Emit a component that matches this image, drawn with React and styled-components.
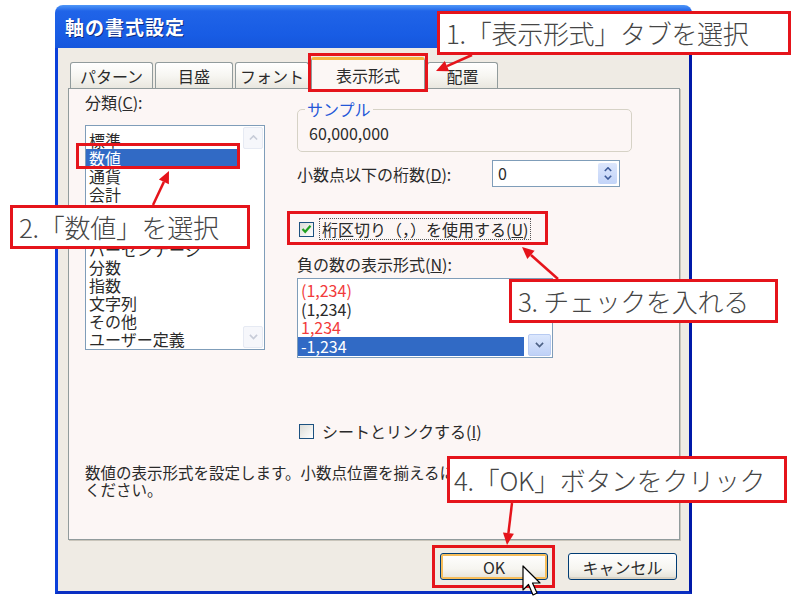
import React from 'react';
import styled, { createGlobalStyle } from 'styled-components';

const FONT = `"Noto Sans CJK JP", "Noto Sans", sans-serif`;
const RED = '#e5141b';

const GlobalStyle = createGlobalStyle`
  html, body {
    margin: 0;
    padding: 0;
    background: #ffffff;
  }
  body {
    font-family: ${FONT};
  }
`;

const Page = styled.div`
  position: relative;
  width: 800px;
  height: 600px;
  overflow: hidden;
  box-sizing: border-box;
  padding: 5px 0 0 55px;
  background: #ffffff;
`;

const Window = styled.div`
  width: 637px;
  height: 589px;
  display: flex;
  flex-direction: column;
`;

const TitleBar = styled.div`
  height: 43px;
  flex: none;
  display: flex;
  align-items: center;
  padding-left: 10px;
  border-radius: 8px 8px 0 0;
  background: linear-gradient(180deg, #4f97f8 0%, #2064e8 14%, #185ce4 70%, #1556dc 100%);
  color: #ffffff;
  font: bold 19px/1 ${FONT};
  letter-spacing: 1px;
  text-shadow: 1px 1px 0 #0c2c86;
`;

const Body = styled.div`
  flex: 1;
  display: flex;
  flex-direction: column;
  border: 3px solid #0b3fda;
  border-top: none;
  border-right-color: #0019a8;
  border-bottom-color: #0a2fc2;
  padding: 9px 9px 11px 10px;
  background: #efebe4;
  color: #2a2a2a;
  font-size: 16px;
`;

const TabStrip = styled.div`
  position: relative;
  z-index: 1;
  height: 32px;
  flex: none;
  display: flex;
  align-items: flex-end;
  gap: 2px;
  padding-left: 2px;
`;

const Tab = styled.div`
  width: ${p => p.$w}px;
  height: ${p => (p.$active ? 33 : 26)}px;
  margin-bottom: ${p => (p.$active ? -1 : 1)}px;
  box-sizing: border-box;
  display: flex;
  align-items: center;
  justify-content: center;
  border: 1px solid #919b9c;
  border-bottom: none;
  border-radius: 3px 3px 0 0;
  border-top: ${p => (p.$active ? '3px solid #f5b642' : '1px solid #919b9c')};
  background: ${p =>
    p.$active ? '#fcf7f5' : 'linear-gradient(180deg, #ffffff 0%, #f7f6f2 50%, #e9e7df 100%)'};
  font-size: 16px;
  padding-top: ${p => (p.$active ? 0 : 1)}px;
`;

const Panel = styled.div`
  flex: 1;
  margin-top: -1px;
  border: 1px solid #919b9c;
  box-shadow: 1px 1px 0 #c9c5bb;
  background: #fcf6f5;
  padding: 3px 0 0 16px;
`;

const Columns = styled.div`
  display: grid;
  grid-template-columns: 180px 335px;
  column-gap: 32px;
  align-items: start;
`;

const Column = styled.div`
  display: flex;
  flex-direction: column;
`;

const Label = styled.div`
  line-height: 20px;
  margin-top: ${p => p.$mt || 0}px;
  white-space: nowrap;
`;

const ListBox = styled.div`
  width: ${p => p.$w}px;
  height: ${p => p.$h}px;
  margin-top: ${p => p.$mt}px;
  box-sizing: border-box;
  border: 1px solid #7f9db9;
  background: #ffffff;
  display: flex;
  overflow: hidden;
`;

const ListItems = styled.div`
  flex: 1;
  padding-top: ${p => p.$pt}px;
  margin-right: ${p => p.$mr || 0}px;
`;

const ListItem = styled.div`
  height: ${p => p.$h}px;
  line-height: ${p => p.$h}px;
  padding-left: 3px;
  white-space: nowrap;
  color: ${p => (p.$selected ? '#ffffff' : p.$red ? '#f23b3b' : '#2a2a2a')};
  background: ${p => (p.$selected ? '#316ac5' : 'transparent')};
`;

const ScrollBar = styled.div`
  width: ${p => p.$w}px;
  display: flex;
  flex-direction: column;
  justify-content: space-between;
  padding: 1px;
  box-sizing: border-box;
`;

const ScrollButton = styled.div`
  height: 20px;
  display: flex;
  align-items: center;
  justify-content: center;
  border-radius: 2px;
  border: 1px solid ${p => (p.$faint ? '#e6eaf3' : '#b8cbf2')};
  background: ${p => (p.$faint ? '#f6f7fb' : 'linear-gradient(180deg, #dce7fd, #bfd1f7)')};
  color: ${p => (p.$faint ? '#c7ccd8' : '#4d6185')};
  visibility: ${p => (p.$hidden ? 'hidden' : 'visible')};
`;

const SampleBox = styled.fieldset`
  margin: 8px 0 0;
  padding: 5px 11px 8px;
  min-inline-size: 0;
  box-sizing: border-box;
  border: 1px solid #d6d2c6;
  border-radius: 5px;
`;

const SampleLegend = styled.legend`
  padding: 0 2px;
  margin-left: -4px;
  line-height: 18px;
  color: #2457d8;
`;

const SampleValue = styled.div`
  line-height: 20px;
`;

const FieldRow = styled.div`
  height: 27px;
  margin-top: 8px;
  display: flex;
  align-items: center;
`;

const FieldLabel = styled.div`
  width: 195px;
  white-space: nowrap;
`;

const SpinBox = styled.div`
  width: 128px;
  height: 27px;
  box-sizing: border-box;
  border: 1px solid #7f9db9;
  background: #ffffff;
  display: flex;
  align-items: stretch;
`;

const SpinValue = styled.div`
  flex: 1;
  padding-left: 5px;
  line-height: 25px;
`;

const SpinButtons = styled.div`
  width: 19px;
  margin: 2px;
  border-radius: 2px;
  background: linear-gradient(180deg, #dce6fc, #c3d4f8);
  display: flex;
  flex-direction: column;
  align-items: center;
  justify-content: center;
  gap: 3px;
  color: #3d5a99;
`;

const CheckRow = styled.div`
  height: 22px;
  margin-top: ${p => p.$mt}px;
  display: flex;
  align-items: center;
  padding-left: 2px;
`;

const CheckBox = styled.span`
  width: 15px;
  height: 15px;
  box-sizing: border-box;
  border: 1px solid #1c5180;
  background: linear-gradient(135deg, #dcdcd7, #ffffff);
  display: flex;
  align-items: center;
  justify-content: center;
  flex: none;
`;

const CheckLabel = styled.span`
  margin-left: 6px;
  padding: 0 2px;
  line-height: 20px;
  white-space: nowrap;
  outline: ${p => (p.$focus ? '1px dotted #555555' : 'none')};
`;

const Description = styled.div`
  margin-top: 22px;
  line-height: 17px;
  font-size: 15.5px;
  white-space: nowrap;
`;

const ButtonRow = styled.div`
  height: 27px;
  margin-top: 13px;
  flex: none;
  display: flex;
  justify-content: flex-end;
  gap: 20px;
  padding-right: 3px;
`;

const Button = styled.div`
  width: ${p => p.$w}px;
  height: 27px;
  box-sizing: border-box;
  display: flex;
  align-items: center;
  justify-content: center;
  border: 1px solid #003c74;
  border-radius: 3px;
  background: linear-gradient(180deg, #ffffff 0%, #f6f5f0 60%, #e4e1d6 100%);
  box-shadow: ${p => (p.$primary ? 'inset 0 0 0 2px #f6bd5a' : 'inset 0 -2px 0 #d8d2c4')};
  font-size: 16px;
`;

const Callout = styled.div`
  position: absolute;
  z-index: 2;
  left: ${p => p.$x}px;
  top: ${p => p.$y}px;
  width: ${p => p.$w}px;
  height: ${p => p.$h}px;
  box-sizing: border-box;
  border: 3px solid ${RED};
  background: #ffffff;
  display: flex;
  align-items: center;
  padding-left: ${p => p.$pad}px;
  font: 300 26px/1 ${FONT};
  letter-spacing: -0.3px;
  color: #454545;
  white-space: nowrap;
`;

const Mark = styled.div`
  position: absolute;
  z-index: 2;
  left: ${p => p.$x}px;
  top: ${p => p.$y}px;
  width: ${p => p.$w}px;
  height: ${p => p.$h}px;
  box-sizing: border-box;
  border: 3px solid ${RED};
`;

const Overlay = styled.svg`
  position: absolute;
  z-index: 3;
  left: 0;
  top: 0;
  pointer-events: none;
`;

const categories = ['標準', '数値', '通貨', '会計', '日付', '時刻', 'パーセンテージ', '分数', '指数', '文字列', 'その他', 'ユーザー定義'];

const negatives = [
  { text: '(1,234)', red: true },
  { text: '(1,234)' },
  { text: '1,234', red: true },
  { text: '-1,234', selected: true },
];

const tabs = [
  { label: 'パターン', w: 83 },
  { label: '目盛', w: 78 },
  { label: 'フォント', w: 74 },
  { label: '表示形式', w: 114, active: true },
  { label: '配置', w: 71 },
];

const arrows = [
  [472, 55, 436, 71],
  [153, 205, 169, 171],
  [558, 279, 522, 247],
  [512, 503, 507, 545],
];

const Chevron = ({ up, size = 9, stroke = 1.8 }) => (
  <svg width={size} height={size * 0.6} viewBox="0 0 10 6">
    <path
      d={up ? 'M1 5 L5 1 L9 5' : 'M1 1 L5 5 L9 1'}
      fill="none"
      stroke="currentColor"
      strokeWidth={stroke}
    />
  </svg>
);

const Check = () => (
  <svg width="11" height="10" viewBox="0 0 11 10">
    <path d="M1.5 5 L4.2 7.8 L9.5 1.8" fill="none" stroke="#21a121" strokeWidth="2.2" />
  </svg>
);

const Arrow = ({ x1, y1, x2, y2 }) => {
  const len = Math.hypot(x2 - x1, y2 - y1);
  const ux = (x2 - x1) / len;
  const uy = (y2 - y1) / len;
  const bx = x2 - ux * 12;
  const by = y2 - uy * 12;
  const nx = -uy * 5.5;
  const ny = ux * 5.5;
  return (
    <g>
      <line x1={x1} y1={y1} x2={bx} y2={by} stroke={RED} strokeWidth="2.5" />
      <polygon points={`${x2},${y2} ${bx + nx},${by + ny} ${bx - nx},${by - ny}`} fill={RED} />
    </g>
  );
};

export default function App() {
  return (
    <Page>
      <GlobalStyle />
      <Window>
        <TitleBar>軸の書式設定</TitleBar>
        <Body>
          <TabStrip>
            {tabs.map(t => (
              <Tab key={t.label} $w={t.w} $active={t.active}>
                {t.label}
              </Tab>
            ))}
          </TabStrip>
          <Panel>
            <Columns>
              <Column>
                <Label>
                  分類(<u>C</u>):
                </Label>
                <ListBox $w={180} $h={225} $mt={13}>
                  <ListItems $pt={5} $mr={4}>
                    {categories.map((c, i) => (
                      <ListItem key={c} $h={18.1} $selected={i === 1}>
                        {c}
                      </ListItem>
                    ))}
                  </ListItems>
                  <ScrollBar $w={22}>
                    <ScrollButton $faint>
                      <Chevron up />
                    </ScrollButton>
                    <ScrollButton $faint>
                      <Chevron />
                    </ScrollButton>
                  </ScrollBar>
                </ListBox>
              </Column>
              <Column>
                <SampleBox>
                  <SampleLegend>サンプル</SampleLegend>
                  <SampleValue>60,000,000</SampleValue>
                </SampleBox>
                <FieldRow>
                  <FieldLabel>
                    小数点以下の桁数(<u>D</u>):
                  </FieldLabel>
                  <SpinBox>
                    <SpinValue>0</SpinValue>
                    <SpinButtons>
                      <Chevron up size={8} stroke={2} />
                      <Chevron size={8} stroke={2} />
                    </SpinButtons>
                  </SpinBox>
                </FieldRow>
                <CheckRow $mt={31}>
                  <CheckBox>
                    <Check />
                  </CheckBox>
                  <CheckLabel $focus>
                    桁区切り（，）を使用する(<u>U</u>)
                  </CheckLabel>
                </CheckRow>
                <Label $mt={14}>
                  負の数の表示形式(<u>N</u>):
                </Label>
                <ListBox $w={256} $h={80} $mt={4}>
                  <ListItems $pt={2} $mr={3}>
                    {negatives.map((n, i) => (
                      <ListItem key={i} $h={18.7} $red={n.red} $selected={n.selected}>
                        {n.text}
                      </ListItem>
                    ))}
                  </ListItems>
                  <ScrollBar $w={25}>
                    <ScrollButton $hidden>
                      <Chevron up />
                    </ScrollButton>
                    <ScrollButton>
                      <Chevron />
                    </ScrollButton>
                  </ScrollBar>
                </ListBox>
                <CheckRow $mt={62}>
                  <CheckBox />
                  <CheckLabel>
                    シートとリンクする(<u>I</u>)
                  </CheckLabel>
                </CheckRow>
              </Column>
            </Columns>
            <Description>
              数値の表示形式を設定します。小数点位置を揃えるには [会計] を使用して
              <br />
              ください。
            </Description>
          </Panel>
          <ButtonRow>
            <Button $w={108} $primary>
              OK
            </Button>
            <Button $w={109}>キャンセル</Button>
          </ButtonRow>
        </Body>
      </Window>

      <Mark $x={308} $y={53} $w={120} $h={39} />
      <Mark $x={76} $y={143} $w={164} $h={26} />
      <Mark $x={287} $y={211} $w={261} $h={34} />
      <Mark $x={432} $y={545} $w={123} $h={43} />

      <Callout $x={437} $y={11} $w={354} $h={44} $pad={6}>
        1.「表示形式」タブを選択
      </Callout>
      <Callout $x={10} $y={205} $w={240} $h={44} $pad={6}>
        2.「数値」を選択
      </Callout>
      <Callout $x={509} $y={279} $w={269} $h={44} $pad={6}>
        3. チェックを入れる
      </Callout>
      <Callout $x={447} $y={456} $w={340} $h={47} $pad={4}>
        4.「OK」ボタンをクリック
      </Callout>

      <Overlay width="800" height="600" viewBox="0 0 800 600">
        {arrows.map(([x1, y1, x2, y2], i) => (
          <Arrow key={i} x1={x1} y1={y1} x2={x2} y2={y2} />
        ))}
        <path
          d="M523 566 L523 590 L528.5 584.5 L533 595 L537 593 L532.5 583 L540 583 Z"
          fill="#ffffff"
          stroke="#000000"
          strokeWidth="1.2"
          strokeLinejoin="round"
        />
      </Overlay>
    </Page>
  );
}
